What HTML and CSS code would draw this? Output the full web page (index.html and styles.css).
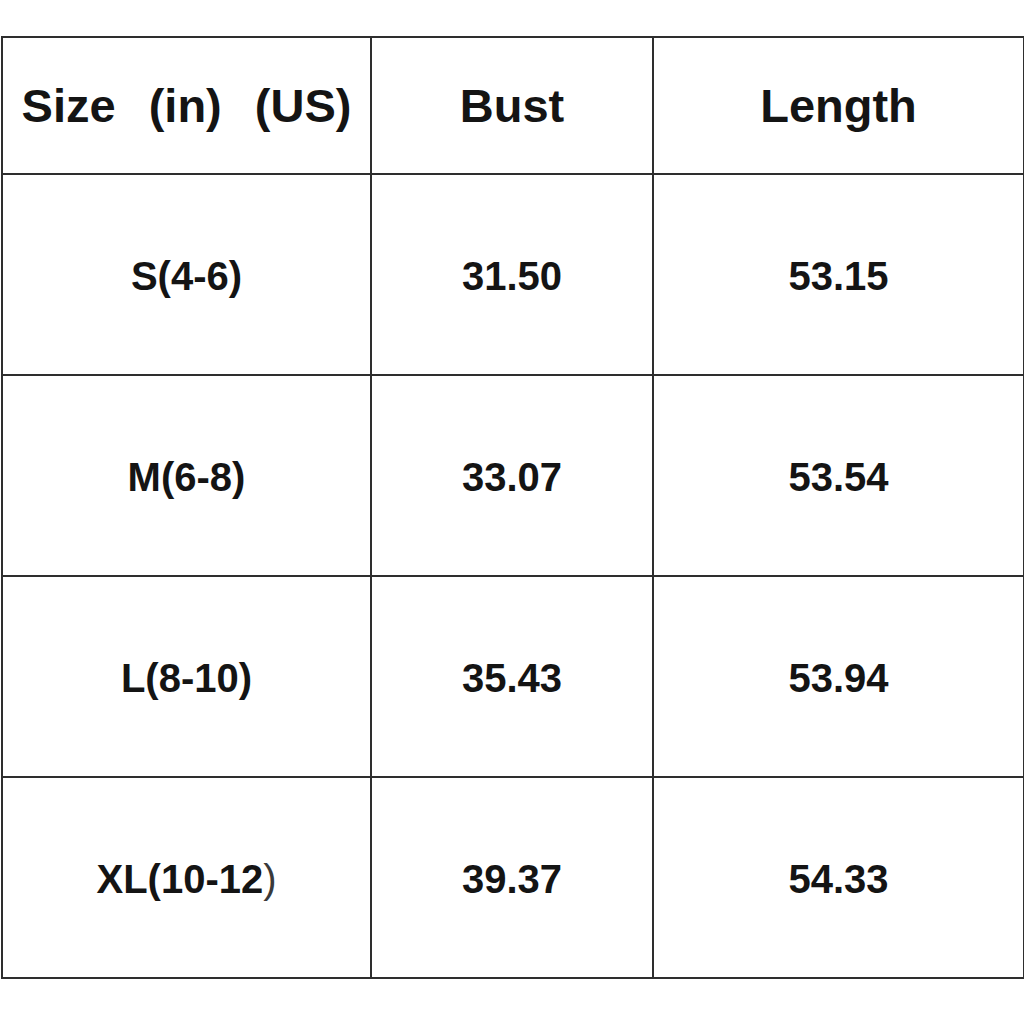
FILE: index.html
```html
<!DOCTYPE html>
<html>
<head>
<meta charset="utf-8">
<link rel="stylesheet" href="styles.css">
</head>
<body>
<table class="size-table">
  <colgroup>
    <col class="col-size">
    <col class="col-bust">
    <col class="col-length">
  </colgroup>
  <thead>
    <tr class="head-row">
      <th class="head-size">Size (in) (US)</th>
      <th>Bust</th>
      <th>Length</th>
    </tr>
  </thead>
  <tbody>
    <tr class="data-row"><td>S(4-6)</td><td>31.50</td><td>53.15</td></tr>
    <tr class="data-row"><td>M(6-8)</td><td>33.07</td><td>53.54</td></tr>
    <tr class="data-row"><td>L(8-10)</td><td>35.43</td><td>53.94</td></tr>
    <tr class="data-row"><td>XL(10-12<span class="thin">)</span></td><td>39.37</td><td>54.33</td></tr>
  </tbody>
</table>
</body>
</html>
```
FILE: styles.css
```css
html, body {
  margin: 0;
  padding: 0;
  background: #ffffff;
}

body {
  padding-top: 36px;
  padding-left: 1px;
}

.size-table {
  border-collapse: collapse;
  table-layout: fixed;
  width: 1022px;
  font-family: "Liberation Sans", Arial, "Noto Sans CJK SC", sans-serif;
  color: #141414;
}

.col-size { width: 369px; }
.col-bust { width: 282px; }
.col-length { width: 371px; }

.size-table th,
.size-table td {
  border: 2px solid #2e2e2e;
  text-align: center;
  vertical-align: middle;
  padding: 0;
  font-weight: bold;
}

.head-row th {
  height: 135px;
  font-size: 47px;
}

.head-size {
  word-spacing: 20px;
  white-space: nowrap;
}

.data-row td {
  height: 196px;
  font-size: 40px;
  padding-top: 3px;
}

.thin {
  font-weight: normal;
  color: #3a3a3a;
}
```
